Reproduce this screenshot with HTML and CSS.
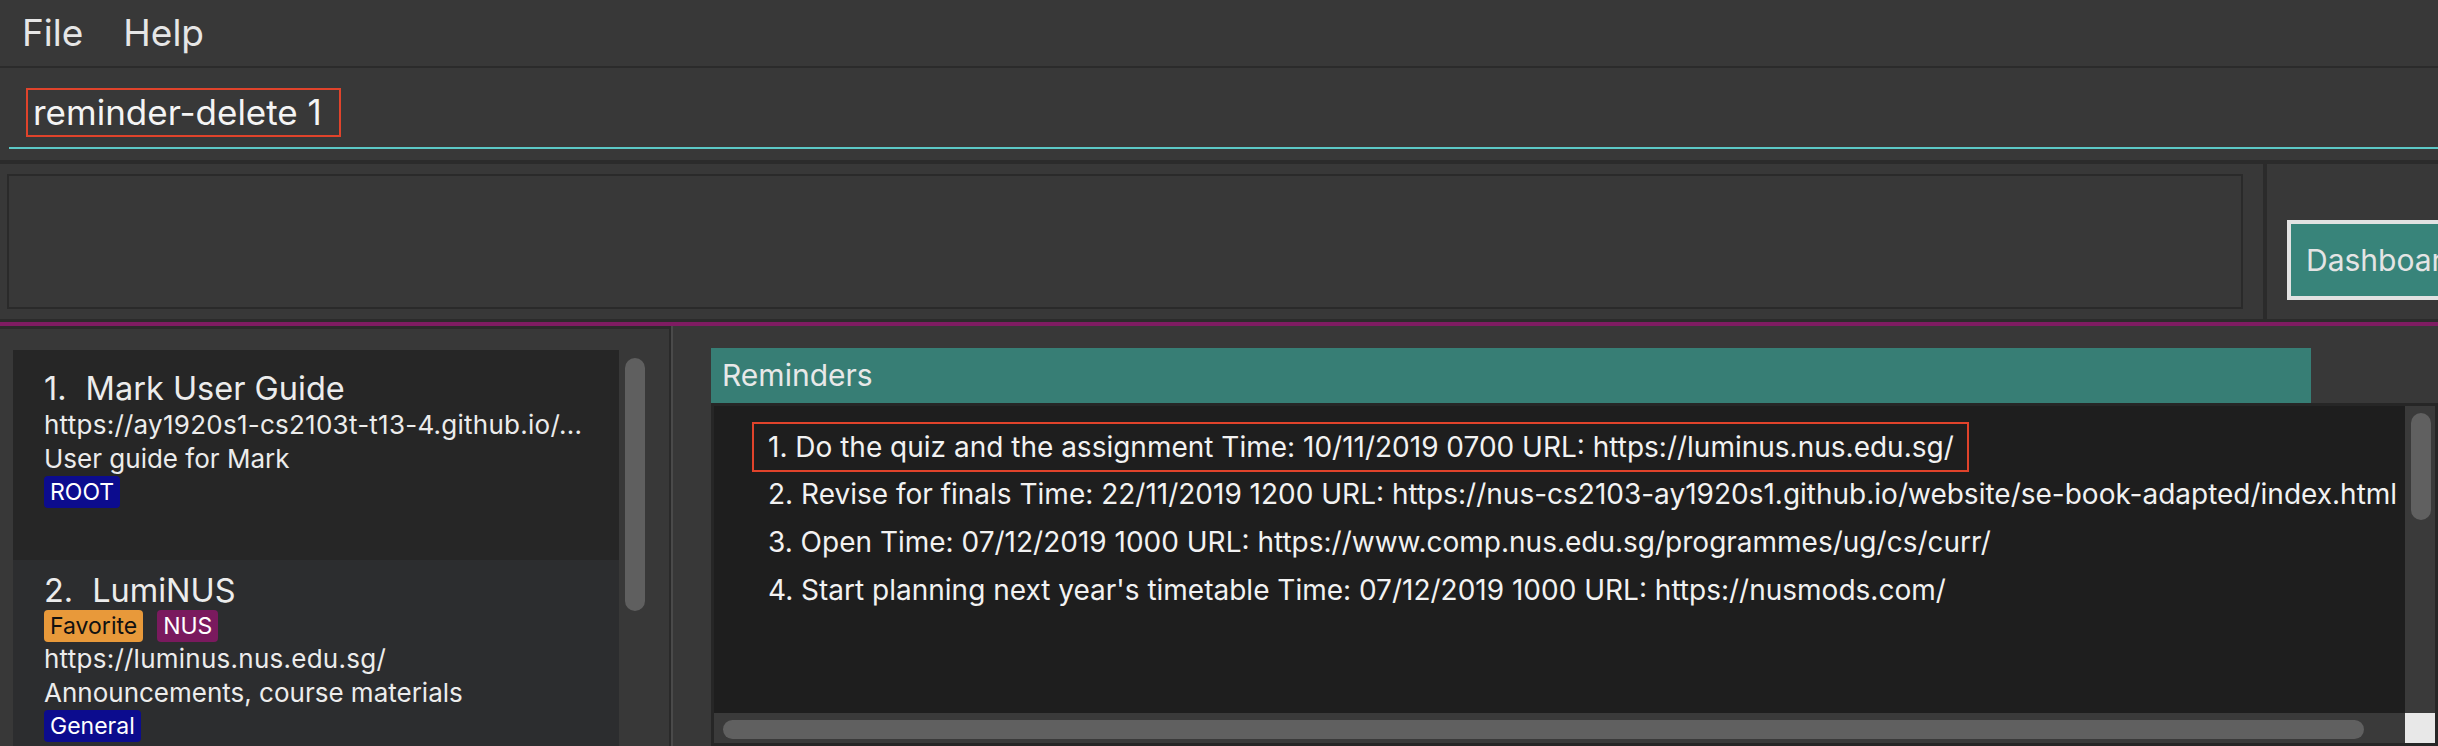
FILE: index.html
```html
<!DOCTYPE html>
<html>
<head>
<meta charset="utf-8">
<link rel="stylesheet" href="styles.css">
</head>
<body>
<div class="app">
  <div class="menubar">
    <span class="menu-item">File</span>
    <span class="menu-item">Help</span>
  </div>
  <div class="sep sep-2"></div>
  <div class="command">
    <div class="cmd-field"><span class="cmd-text">reminder-delete 1</span></div>
  </div>
  <div class="sep sep-4"></div>
  <div class="result-row">
    <div class="result-wrap"><div class="result-box"></div></div>
    <div class="vdivider"></div>
    <div class="tabs"><div class="dash-btn">Dashboard</div></div>
  </div>
  <div class="sep sep-3"></div>
  <div class="purple"></div>
  <div class="main">
    <div class="left">
      <div class="cells">
        <div class="cell cell-a">
          <div class="title"><span class="idx">1.</span><span class="name">Mark User Guide</span></div>
          <div class="line url">https://ay1920s1-cs2103t-t13-4.github.io/...</div>
          <div class="line">User guide for Mark</div>
          <div class="tags"><span class="tag tag-navy">ROOT</span></div>
        </div>
        <div class="cell cell-b">
          <div class="title"><span class="idx">2.</span><span class="name">LumiNUS</span></div>
          <div class="tags"><span class="tag tag-orange">Favorite</span><span class="tag tag-purple">NUS</span></div>
          <div class="line url">https://luminus.nus.edu.sg/</div>
          <div class="line">Announcements, course materials</div>
          <div class="tags"><span class="tag tag-navy">General</span></div>
        </div>
      </div>
      <div class="lscroll"></div>
    </div>
    <div class="vborder"></div>
    <div class="right">
      <div class="rem-header">Reminders</div>
      <div class="rem-list">
        <div class="rem-view">
          <div class="rem-row rem-first"><span class="hl">1. Do the quiz and the assignment Time: 10/11/2019 0700 URL: https://luminus.nus.edu.sg/</span></div>
          <div class="rem-row">2. Revise for finals Time: 22/11/2019 1200 URL: https://nus-cs2103-ay1920s1.github.io/website/se-book-adapted/index.html</div>
          <div class="rem-row">3. Open Time: 07/12/2019 1000 URL: https://www.comp.nus.edu.sg/programmes/ug/cs/curr/</div>
          <div class="rem-row">4. Start planning next year's timetable Time: 07/12/2019 1000 URL: https://nusmods.com/</div>
        </div>
        <div class="vtrack"><div class="vthumb"></div></div>
        <div class="htrack"><div class="hthumb"></div></div>
        <div class="corner"></div>
      </div>
    </div>
  </div>
</div>
</body>
</html>
```

FILE: styles.css
```css
* { box-sizing: border-box; }
html, body {
  margin: 0;
  padding: 0;
  background: #383838;
  overflow: hidden;
}
body {
  width: 2438px;
  height: 746px;
  font-family: Inter, "Noto Sans", sans-serif;
  color: #ececec;
}
.app {
  width: 2438px;
  height: 746px;
  display: flex;
  flex-direction: column;
}
.menubar {
  height: 66px;
  display: flex;
  align-items: center;
  padding-left: 22px;
  gap: 40px;
  font-size: 37px;
  line-height: 66px;
  color: #e6e6e6;
}
.sep { background: #2b2b2b; flex: none; }
.sep-2 { height: 2px; }
.sep-3 { height: 3px; }
.sep-4 { height: 4px; }
.purple { height: 4px; background: #7f1c62; flex: none; }

.command {
  height: 92px;
  flex: none;
  padding-left: 9px;
}
.cmd-field {
  padding-top: 20px;
  padding-bottom: 10px;
  border-bottom: 2px solid #5cc8c6;
}
.cmd-text {
  display: inline-block;
  margin-left: 17px;
  height: 49px;
  border: 2px solid #e0432b;
  padding: 0 17px 0 5px;
  font-size: 35px;
  line-height: 45px;
  color: #f4f4f4;
}

.result-row {
  height: 155px;
  flex: none;
  display: flex;
}
.result-wrap {
  padding: 10px 0 10px 7px;
}
.result-box {
  width: 2236px;
  height: 135px;
  border: 2px solid #2a2a2a;
}
.vdivider {
  width: 4px;
  margin-left: 20px;
  background: #2b2b2b;
}
.tabs {
  flex: 1;
  overflow: hidden;
  padding: 56px 0 0 20px;
}
.dash-btn {
  width: 240px;
  height: 80px;
  border: 4px solid #e2e2e2;
  background: #38847a;
  padding-left: 15px;
  font-size: 30px;
  line-height: 72px;
  color: #e4e4e4;
  white-space: nowrap;
}

.main {
  flex: 1;
  display: flex;
  min-height: 0;
}
.left {
  width: 669px;
  flex: none;
  border-top: 3px solid #2b2b2b;
  display: flex;
  padding: 21px 0 0 13px;
  overflow: hidden;
}
.cells { width: 606px; flex: none; }
.cell { width: 606px; padding-left: 31px; }
.cell-a { background: #262626; height: 210px; padding-top: 20px; }
.cell-b { background: #2c2d2f; height: 200px; padding-top: 12px; }
.title {
  font-size: 32.5px;
  line-height: 38px;
  white-space: nowrap;
}
.name { margin-left: 19px; }
.line {
  font-size: 26px;
  line-height: 34px;
  white-space: nowrap;
}
.url { letter-spacing: 0.25px; }
.tags { display: flex; gap: 14px; height: 32px; }
.tag {
  height: 32px;
  padding: 0 6px;
  border-radius: 4px;
  font-size: 23px;
  line-height: 32px;
  color: #ffffff;
}
.tag-navy { background: #0c0c8e; }
.tag-orange { background: #e8993a; color: #111; }
.tag-purple { background: #7a1a5e; }
.lscroll {
  width: 20px;
  height: 253px;
  margin: 8px 0 0 6px;
  border-radius: 10px;
  background: #5f5f5f;
  flex: none;
}
.vborder {
  width: 4px;
  flex: none;
  border-left: 2px solid #2a2a2a;
  border-right: 2px solid #4a4a4a;
}

.right {
  flex: 1;
  min-width: 0;
  display: flex;
  flex-direction: column;
  padding: 22px 0 0 38px;
}
.rem-header {
  width: 1600px;
  height: 55px;
  flex: none;
  background: #377e75;
  padding-left: 11px;
  font-size: 30px;
  line-height: 55px;
  color: #e8e8e8;
}
.rem-list {
  flex: 1;
  min-height: 0;
  border: 3px solid #262626;
  display: grid;
  grid-template-columns: 1fr 30px;
  grid-template-rows: 1fr 30px;
}
.rem-view {
  background: #1e1e1e;
  overflow: hidden;
  padding: 16px 0 0 38px;
  font-size: 28px;
  color: #f2f2f2;
  white-space: nowrap;
}
.rem-row {
  line-height: 48px;
  padding-left: 16px;
}
.rem-first {
  padding-left: 0;
  margin-bottom: -2px;
}
.hl {
  display: inline-block;
  border: 2px solid #e0432b;
  padding: 0 13px 0 14px;
  line-height: 46px;
}
.vtrack { background: #3a3a3a; padding: 7px 4px 0 6px; }
.vthumb { height: 107px; border-radius: 10px; background: #606060; }
.htrack { background: #3a3a3a; padding: 7px 0 0 9px; }
.hthumb { width: 1641px; height: 19px; border-radius: 10px; background: #606060; }
.corner { background: #e8e8e8; }
```
